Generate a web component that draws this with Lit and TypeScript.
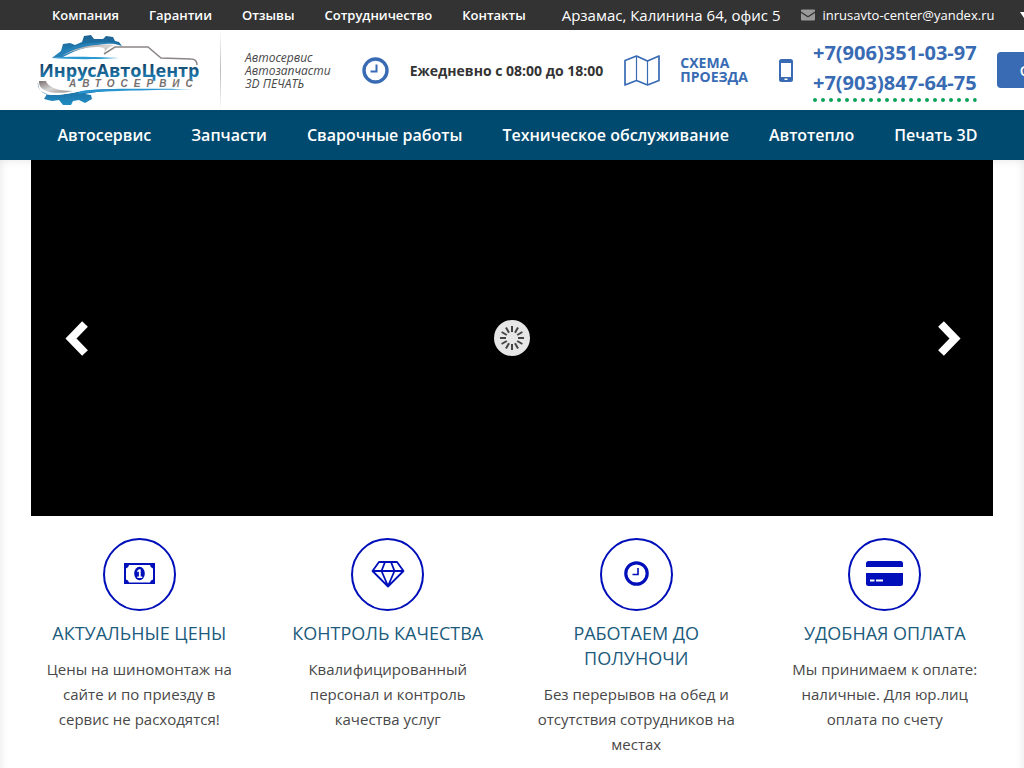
import { LitElement, html, svg, css } from "lit";
import { customElement, state } from "lit/decorators.js";

const topLinks = ["Компания", "Гарантии", "Отзывы", "Сотрудничество", "Контакты"];

const sections = [
  "Автосервис",
  "Запчасти",
  "Сварочные работы",
  "Техническое обслуживание",
  "Автотепло",
  "Печать 3D",
];

const phones = ["+7(906)351-03-97", "+7(903)847-64-75"];

const moneyIcon = svg`
  <path fill-rule="evenodd" d="M21 25h31v21h-31zM26 27a4 4 0 0 1-3 3.500v11a4 4 0 0 1 3 3h21a4 4 0 0 1 3-3v-11a4 4 0 0 1-3-3.500z"/>
  <ellipse cx="36.500" cy="35.500" rx="5.300" ry="6.700"/>
  <path d="M34 33l2-1.700h1.700v7.200h1.600v1.500h-5v-1.500h1.600v-5l-1.300.8z" fill="#fff"/>`;

const diamondIcon = svg`
  <g fill="none" stroke="currentColor" stroke-width="1.800" stroke-linejoin="round">
    <path d="M28 24h18l6.500 9-15.500 15.500-15.500-15.500zM21 33h32M34 24l-3.500 9 6.500 15 6.500-15-3.500-9"/>
  </g>`;

const clockIcon = svg`
  <g fill="none" stroke="currentColor">
    <circle cx="36.500" cy="35.500" r="10.700" stroke-width="3.200"/>
    <path d="M38 30v6.500H32.500" stroke-width="1.600"/>
  </g>`;

const cardIcon = svg`
  <path d="M18 29v-3.500a2.500 2.500 0 0 1 2.500-2.500h32a2.500 2.500 0 0 1 2.500 2.500V29z"/>
  <path fill-rule="evenodd" d="M18 35h37v10.500a2.500 2.500 0 0 1-2.500 2.500h-32a2.500 2.500 0 0 1-2.500-2.500zM22 41.500v2h4.500v-2zM28 41.500v2h7v-2z"/>`;

const features = [
  { icon: moneyIcon, title: "Актуальные цены", text: "Цены на шиномонтаж на сайте и по приезду в сервис не расходятся!" },
  { icon: diamondIcon, title: "Контроль качества", text: "Квалифицированный персонал и контроль качества услуг" },
  { icon: clockIcon, title: "Работаем до полуночи", text: "Без перерывов на обед и отсутствия сотрудников на местах" },
  { icon: cardIcon, title: "Удобная оплата", text: "Мы принимаем к оплате: наличные. Для юр.лиц оплата по счету" },
];

@customElement("brand-logo")
class BrandLogo extends LitElement {
  static styles = css`
    :host { display: block; flex: none; }
    svg { display: block; }
    .name { font: 700 18px/1 "Open Sans", sans-serif; }
    .sub { font: italic 700 10px/1 "Liberation Sans", sans-serif; letter-spacing: 6px; }
  `;
  render() {
    return html`<svg width="164" height="72" viewBox="0 0 164 72" role="img" aria-label="ИнрусАвтоЦентр">
      <defs>
        <linearGradient id="gear" x1="0" x2="0" y1="0" y2="1">
          <stop offset="0" stop-color="#1d6090" /><stop offset="1" stop-color="#1f8cc4" />
        </linearGradient>
        <linearGradient id="word" x1="0" x2="0" y1="0" y2="1">
          <stop offset="0.2" stop-color="#123c5c" /><stop offset="0.9" stop-color="#1f86bf" />
        </linearGradient>
        <linearGradient id="steel" x1="0" x2="1" y1="0" y2="1">
          <stop offset="0" stop-color="#77706f" /><stop offset="0.5" stop-color="#d8d6d5" /><stop offset="1" stop-color="#8b8685" />
        </linearGradient>
      </defs>
      <path fill="url(#gear)" d="M15 24L24 17L26 10L33 9L38 11L45 8L47 2L54 1L57 5L66 5L69 2L76 3L78 7L82 8L85 12C73 8 62 9 52 12C39 14 28 19 15 24Z" />
      <path fill="#2b9ad3" d="M15 24C34 22 52 23 82 24C51 26 32 25 15 24Z" />
      <path fill="#2681b9" d="M15 24C32 11 54 6 80 9C58 10 40 15 26 23Z" />
      <path fill="url(#steel)" d="M25 22C37 14 56 9 78 11C71 13 70 15 67 19C69 15 68 14 62 13C46 13 34 17 25 22Z" />
      <path fill="none" stroke="#8b8685" stroke-width="1.500" d="M67 20L78 13H111L124 24L154 25C158 25 160 27 160 31" />
      <path fill="url(#gear)" d="M1 48C1 64 17 62 34 59C54 55 72 55 90 55C68 57 57 58 48 60L54 61L55 65L48 69L42 66L36 67L34 71L26 71L22 66L15 67L7 65L10 60C3 58 0 53 1 48Z" />
      <path fill="#fff" d="M6 56C14 63 28 61 44 57C28 58 14 60 6 56Z" />
      <path fill="#2894cf" d="M44 57C70 54 100 55 156 55C100 57 70 56 40 60Z" />
      <path fill="url(#steel)" d="M2 47H9C11 53 20 57 36 57C20 61 1 59 2 47Z" />
      <text class="name" x="2" y="43" fill="url(#word)">ИнрусАвтоЦентр</text>
      <text class="sub" x="32" y="53" fill="#77706f">АВТОСЕРВИС</text>
    </svg>`;
  }
}

@customElement("feature-card")
class FeatureCard extends LitElement {
  static properties = { feature: { attribute: false } };
  declare feature: (typeof features)[number];
  static styles = css`
    :host { display: block; padding: 0 24px; text-align: center; }
    svg { display: block; margin: 0 auto; color: #000fb9; fill: currentColor; }
    h3 { margin: 10px 0 11px; font-size: 18px; font-weight: 400; line-height: 25px; text-transform: uppercase; color: #1c5b7c; }
    p { margin: 0; font-size: 15px; font-weight: 400; line-height: 25px; color: #484848; }
  `;
  render() {
    return html`
      <svg width="73" height="73" viewBox="0 0 73 73" aria-hidden="true">
        <circle cx="36.500" cy="36.500" r="35.500" fill="none" stroke="currentColor" stroke-width="2" />
        ${this.feature.icon}
      </svg>
      <h3>${this.feature.title}</h3>
      <p>${this.feature.text}</p>
    `;
  }
}

@customElement("app-root")
class AppRoot extends LitElement {
  @state() slide = 0;

  static styles = css`
    :host {
      display: block;
      min-height: 100vh;
      overflow: hidden;
      background: #fff;
      color: #333;
      font-family: "Open Sans", sans-serif;
    }
    a { color: inherit; text-decoration: none; }
    a, span, button { white-space: nowrap; }
    button { border: 0; padding: 0; background: none; font: inherit; cursor: pointer; }
    svg { display: block; flex: none; }
    .top {
      display: flex;
      align-items: center;
      height: 30px;
      padding-left: 52px;
      background: #333;
      color: #fff;
      font-size: 13px;
    }
    .links { display: flex; gap: 30px; font-weight: 600; }
    .address { margin-left: 36px; font-size: 15px; }
    .mail { display: flex; align-items: center; gap: 7px; margin: 0 26px 0 21px; }
    .head {
      display: flex;
      align-items: center;
      height: 80px;
      padding-left: 37px;
    }
    .slogan {
      margin-left: 19px;
      padding: 20px 0 20px 24px;
      border-left: 1px solid;
      border-image: linear-gradient(#fff, #bbb, #fff) 1;
      color: #484848;
      font-size: 12px;
      font-style: italic;
      font-weight: 400;
      line-height: 13px;
      white-space: nowrap;
    }
    .clock { margin-left: 31px; color: #386bb3; }
    .hours { margin-left: 21px; font-size: 14px; font-weight: 700; }
    .map { display: flex; align-items: center; gap: 20px; margin-left: 21px; color: #386bb3; font-size: 14px; font-weight: 700; line-height: 14px; }
    .phone { margin-left: 31px; color: #386bb3; }
    .phones {
      display: flex;
      flex-direction: column;
      margin-left: 20px;
      color: #386bb3;
      font-size: 20px;
      font-weight: 700;
      line-height: 30px;
    }
    .dots { display: block; width: 100%; height: 4px; }
    .call { flex: none; height: 36px; margin-left: 20px; padding: 0 23px; border-radius: 4px; background: #386bb3; color: #fff; font-size: 14px; font-weight: 600; }
    .nav {
      display: flex;
      justify-content: center;
      gap: 40px;
      padding: 0 46px 0 57px;
      background: #004a6f;
      color: #fff;
      font-size: 16px;
      font-weight: 600;
      line-height: 50px;
    }
    .body {
      min-height: calc(100vh - 160px);
      box-sizing: border-box;
      padding: 0 15px 20px;
      box-shadow: inset 0 0 10px #e4e4e4;
    }
    .slider {
      display: flex;
      align-items: center;
      justify-content: space-between;
      height: 356px;
      margin: 0 16px;
      padding: 0 32px;
      background: #000;
    }
    .features { display: grid; grid-template-columns: repeat(4, 1fr); padding-top: 22px; }
  `;

  render() {
    return html`
      <div class="top">
        <nav class="links">${topLinks.map((t) => html`<a href="#">${t}</a>`)}</nav>
        <span class="address">Арзамас, Калинина 64, офис 5</span>
        <a class="mail" href="mailto:inrusavto-center@yandex.ru">
          <svg width="14" height="12" viewBox="0 0 14 12" fill="#999" aria-hidden="true">
            <path d="M0 2.500V1.500A1 1 0 0 1 1 .5h12a1 1 0 0 1 1 1v1L7 7z" />
            <path d="M0 4l7 4.500L14 4v6.500a1 1 0 0 1-1 1H1a1 1 0 0 1-1-1z" />
          </svg>
          <span>inrusavto-center@yandex.ru</span>
        </a>
        <svg width="8" height="6" viewBox="0 0 8 6" fill="#fff" aria-hidden="true"><path d="M0 0h8L4 6z" /></svg>
      </div>

      <header class="head">
        <brand-logo></brand-logo>
        <div class="slogan">Автосервис<br />Автозапчасти<br />3D ПЕЧАТЬ</div>
        <svg class="clock" width="27" height="27" viewBox="0 0 27 27" fill="none" stroke="currentColor" aria-hidden="true">
          <circle cx="13.500" cy="13.500" r="11.500" stroke-width="3.400" />
          <path d="M14.500 7.500v7H8.500" stroke-width="2" />
        </svg>
        <span class="hours">Ежедневно с 08:00 до 18:00</span>
        <a class="map" href="#">
          <svg width="36" height="31" viewBox="0 0 36 31" fill="none" stroke="currentColor" stroke-width="1.700" stroke-linejoin="round" aria-hidden="true">
            <path d="M1 5.500L12.500 1 23.500 6 35 1v24.500L23.500 30l-11-4.500L1 30z" />
            <path d="M12.500 1v24.500M23.500 6v24" stroke-width="1.200" />
          </svg>
          <span>СХЕМА<br />ПРОЕЗДА</span>
        </a>
        <svg class="phone" width="14" height="23" viewBox="0 0 14 23" fill="currentColor" aria-hidden="true">
          <path fill-rule="evenodd" d="M2.500 0h9A2.500 2.500 0 0 1 14 2.500v18a2.500 2.500 0 0 1-2.500 2.500h-9A2.500 2.500 0 0 1 0 20.500v-18A2.500 2.500 0 0 1 2.500 0zM2 4v14h10V4zM5.500 19.500v1.500h3v-1.500z" />
        </svg>
        <div class="phones">
          ${phones.map((p) => html`<a href="tel:${p}">${p}</a>`)}
          <svg class="dots" aria-hidden="true">
            <defs><pattern id="dot" width="8" height="4" patternUnits="userSpaceOnUse"><circle cx="2" cy="2" r="2" fill="#0da15a" /></pattern></defs>
            <rect width="100%" height="4" fill="url(#dot)" />
          </svg>
        </div>
        <button class="call">Обратный звонок</button>
      </header>

      <nav class="nav">${sections.map((t) => html`<a href="#">${t}</a>`)}</nav>

      <main class="body">
        <section class="slider">
          <button aria-label="Назад" @click=${() => this.slide--}>
            <svg width="28" height="40" viewBox="0 0 28 40" fill="none" stroke="#fff" stroke-width="8"><path d="M22 6L8 20.500 22 35" /></svg>
          </button>
          <svg width="36" height="36" viewBox="0 0 36 36" role="img" aria-label="Загрузка">
            <circle cx="18" cy="18" r="18" fill="#e6e6e6" />
            ${Array.from({ length: 12 }, (_, i) => svg`<path d="M18 6v6" stroke="#444" stroke-width="2" transform="rotate(${i * 30} 18 18)"/>`)}
          </svg>
          <button aria-label="Вперёд" @click=${() => this.slide++}>
            <svg width="28" height="40" viewBox="0 0 28 40" fill="none" stroke="#fff" stroke-width="8"><path d="M8 6l14 14.500L8 35" /></svg>
          </button>
        </section>
        <section class="features">
          ${features.map((f) => html`<feature-card .feature=${f}></feature-card>`)}
        </section>
      </main>
    `;
  }
}
